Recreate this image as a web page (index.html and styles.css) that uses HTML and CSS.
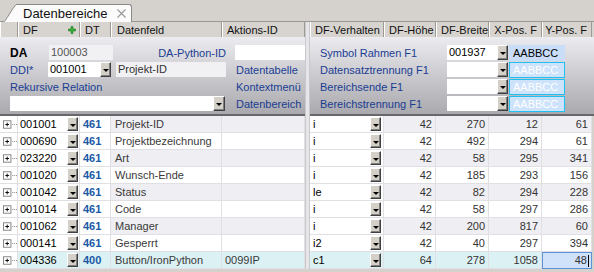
FILE: index.html
```html
<!DOCTYPE html>
<html lang="de">
<head>
    <meta charset="UTF-8">
    <title>Datenbereiche</title>
    <link rel="stylesheet" href="styles.css">
</head>
<body>
    <div class="tabbar">
        <svg class="tab-edge" width="13" height="18" viewBox="0 0 13 18">
            <path d="M0 18 C4 13 8 5 12 0.5 L13 0.5 L13 18 Z" fill="#fbfbfb"/>
            <path d="M0.5 17.5 C4 13 8 5 12 0.5 L13 0.5" fill="none" stroke="#8a8a8a"/>
        </svg>
        <div class="tab">
            <span>Datenbereiche</span>
            <svg class="tab-close" width="9" height="9" viewBox="0 0 9 9">
                <path d="M0.5 0.5 L8.5 8.5 M8.5 0.5 L0.5 8.5" stroke="#9a9a9a" stroke-width="1.2"/>
            </svg>
        </div>
    </div>

    <div class="split">
        <!-- fixed columns -->
        <div class="pane pane-left">
            <div class="hdr cols-left">
                <div class="hc"></div>
                <div class="hc hc-df">DF
                    <svg class="plus" width="8" height="8" viewBox="0 0 8 8">
                        <path d="M3 0.5 H5 V3 H7.5 V5 H5 V7.5 H3 V5 H0.5 V3 H3 Z" fill="#37b33c" stroke="#1f7a24" stroke-width="0.6"/>
                    </svg>
                </div>
                <div class="hc">DT</div>
                <div class="hc hc-feld">Datenfeld</div>
                <div class="hc">Aktions-ID</div>
            </div>

            <div class="form form-left">
                <div class="frow">
                    <span class="lbl-bold">DA</span>
                    <span class="inp inp-ro inp-da">100003</span>
                    <span class="lbl lbl-right">DA-Python-ID</span>
                </div>
                <div class="frow frow-side">
                    <span class="inp inp-pyid"></span>
                </div>

                <div class="frow">
                    <span class="lbl lbl-ddi">DDI*</span>
                    <span class="inp inp-ddi">001001</span>
                    <span class="dd"></span>
                    <span class="inp inp-ro inp-name">Projekt-ID</span>
                </div>
                <div class="frow frow-side"><span class="lbl">Datentabelle</span></div>

                <div class="frow"><span class="lbl">Rekursive Relation</span></div>
                <div class="frow frow-side"><span class="lbl">Kontextmenü</span></div>

                <div class="frow">
                    <span class="inp inp-rel"></span>
                    <span class="dd dd-wide"></span>
                </div>
                <div class="frow frow-side"><span class="lbl">Datenbereich</span></div>
            </div>

            <div class="rows" id="rowsLeft"></div>
        </div>

        <div class="splitter"></div>

        <!-- scrolling columns -->
        <div class="pane pane-right">
            <div class="hdr cols-right">
                <div class="hc">DF-Verhalten</div>
                <div class="hc">DF-Höhe</div>
                <div class="hc">DF-Breite</div>
                <div class="hc hc-num">X-Pos. F</div>
                <div class="hc hc-num">Y-Pos. F</div>
            </div>

            <div class="form form-right">
                <div class="frow">
                    <span class="lbl lbl-wide">Symbol Rahmen F1</span>
                    <span class="inp inp-col">001937</span>
                    <span class="dd"></span>
                    <span class="swatch swatch-set">AABBCC</span>
                </div>
                <div class="frow">
                    <span class="lbl lbl-wide">Datensatztrennung F1</span>
                    <span class="inp inp-col"></span>
                    <span class="dd"></span>
                    <span class="swatch">AABBCC</span>
                </div>
                <div class="frow">
                    <span class="lbl lbl-wide">Bereichsende F1</span>
                    <span class="inp inp-col"></span>
                    <span class="dd"></span>
                    <span class="swatch">AABBCC</span>
                </div>
                <div class="frow">
                    <span class="lbl lbl-wide">Bereichstrennung F1</span>
                    <span class="inp inp-col"></span>
                    <span class="dd"></span>
                    <span class="swatch">AABBCC</span>
                </div>
            </div>

            <div class="rows" id="rowsRight"></div>
        </div>
    </div>

    <script src="script.js"></script>
</body>
</html>
```

FILE: styles.css
```css
* {
    margin: 0;
    padding: 0;
    box-sizing: border-box;
}

body {
    width: 594px;
    height: 272px;
    overflow: hidden;
    background: #d5d2cd;
    font-family: "Liberation Sans", Arial, sans-serif;
    font-size: 11px;
    color: #222;
}

/* tab strip */
.tabbar {
    height: 22px;
    display: flex;
    align-items: flex-end;
    padding-left: 4px;
    border-bottom: 1px solid #9a9894;
}

.tab-edge {
    display: block;
    margin-bottom: -1px;
}

.tab {
    height: 18px;
    width: 115px;
    margin-bottom: -1px;
    background: #fbfbfb;
    border-top: 1px solid #8a8a8a;
    border-right: 1px solid #8a8a8a;
    border-top-right-radius: 3px;
    padding-left: 6px;
    display: flex;
    align-items: center;
    gap: 9px;
    font-size: 13px;
    color: #111;
}

.tab-close {
    display: block;
}

/* split panes */
.split {
    display: flex;
}

.pane-left {
    width: 305px;
}

.pane-right {
    width: 284px;
}

.splitter {
    width: 5px;
    background: #e6e5e8;
    border-left: 1px solid #c9c8cc;
    border-right: 1px solid #c9c8cc;
}

.cols-left {
    display: grid;
    grid-template-columns: 18px 62px 31px 111px 83px;
}

.cols-right {
    display: grid;
    grid-template-columns: 74px 52px 53px 53px 50px;
}

/* header */
.hdr {
    height: 15px;
    background: #d7d4cf;
}

.hc {
    border-left: 1px solid #fff;
    border-right: 1px solid #9d9a95;
    padding-left: 4px;
    line-height: 14px;
    color: #111;
    white-space: nowrap;
    display: flex;
    align-items: center;
}

.hc-df {
    justify-content: space-between;
    padding-right: 3px;
}

.hc-feld {
    padding-left: 5px;
}

.hc-num {
    justify-content: flex-end;
    padding-right: 4px;
}

.plus {
    display: block;
}

/* form area */
.form {
    height: 79px;
    padding: 8px 0 3px 10px;
    background: linear-gradient(#ecebef, #a9a9ae);
    border-bottom: 2px solid #68686c;
    display: grid;
    grid-auto-rows: 15px;
    row-gap: 2px;
}

.form-left {
    grid-template-columns: 216px 79px;
}

.form-right {
    grid-template-columns: 1fr;
}

.frow {
    display: flex;
    align-items: center;
    height: 15px;
}

.frow-side {
    padding-left: 10px;
}

.lbl {
    color: #1a3d92;
    white-space: nowrap;
}

.lbl-bold {
    width: 39px;
    font-weight: bold;
    font-size: 12px;
    color: #000;
}

.lbl-right {
    margin-left: auto;
}

.lbl-ddi {
    width: 38px;
}

.lbl-wide {
    width: 127px;
}

.inp {
    height: 15px;
    background: #fff;
    line-height: 15px;
    padding-left: 2px;
    color: #000;
    white-space: nowrap;
}

.inp-ro {
    background: #f1f0f3;
    color: #555;
}

.inp-da {
    width: 64px;
}

.inp-pyid {
    width: 70px;
    margin-left: -1px;
}

.inp-ddi {
    width: 52px;
}

.inp-name {
    width: 110px;
    margin-left: 5px;
    color: #333;
}

.inp-rel {
    width: 203px;
}

.inp-col {
    width: 50px;
}

/* combo button */
.dd {
    width: 11px;
    height: 15px;
    background: #d4d0c8;
    border: 1px solid;
    border-color: #fff #404040 #404040 #fff;
    box-shadow: inset -1px -1px #808080;
    display: flex;
    align-items: center;
    justify-content: center;
    flex: none;
}

.dd::after {
    content: "";
    margin-top: 2px;
    border-left: 3px solid transparent;
    border-right: 3px solid transparent;
    border-top: 3px solid #000;
}

.dd-wide {
    width: 12px;
}

.swatch {
    width: 56px;
    height: 16px;
    margin-left: 1px;
    background: #cde2fb;
    border: 1px solid #1ec1f2;
    color: #fff;
    line-height: 14px;
    padding-left: 3px;
}

.swatch-set {
    background: #c9dcf8;
    border-color: #c9dcf8;
    color: #000;
}

/* rows */
.row {
    height: 17px;
}

.cell {
    border-right: 1px solid #e0dfe3;
    border-bottom: 1px solid #e0dfe3;
    line-height: 16px;
    padding: 0 3px;
    white-space: nowrap;
    overflow: hidden;
    color: #3a3a3a;
    background: #fff;
}

.row.odd .cell {
    background: #efeef2;
}

.row .cell.plain {
    background: #fff;
}

.row.sel .cell {
    background: #dcf1f3;
}

.row.sel .cell.exp {
    background: #fff;
}

.exp {
    display: flex;
    align-items: center;
    padding: 0 0 0 3px;
}

.tree-box {
    display: block;
}

.df {
    display: flex;
    align-items: center;
    justify-content: space-between;
    padding: 0 1px 0 2px;
    color: #000;
}

.df .dd,
.behav .dd {
    height: 14px;
}

.dt {
    font-weight: bold;
    color: #1a5aa6;
    padding-left: 3px;
}

.feld {
    padding-left: 4px;
}

.behav {
    display: flex;
    align-items: center;
    justify-content: space-between;
    padding: 0 2px 0 3px;
    color: #000;
}

.num {
    text-align: right;
    padding-right: 3px;
    color: #333;
}

.row.sel .cell.cur {
    background: #cfe2f9;
    border: 1px solid #5b93d6;
    line-height: 14px;
    padding-right: 2px;
}

.caret {
    display: inline-block;
    width: 1px;
    height: 12px;
    background: #000;
    vertical-align: middle;
    margin-left: 1px;
}
```

FILE: script.js
```js
const rows = [
    ['001001', '461', 'Projekt-ID', '', 'i', 42, 270, 12, 61],
    ['000690', '461', 'Projektbezeichnung', '', 'i', 42, 492, 294, 61],
    ['023220', '461', 'Art', '', 'i', 42, 58, 295, 341],
    ['001020', '461', 'Wunsch-Ende', '', 'i', 42, 185, 293, 156],
    ['001042', '461', 'Status', '', 'le', 42, 82, 294, 228],
    ['001014', '461', 'Code', '', 'i', 42, 58, 297, 286],
    ['001062', '461', 'Manager', '', 'i', 42, 200, 817, 60],
    ['000141', '461', 'Gesperrt', '', 'i2', 42, 40, 297, 394],
    ['004336', '400', 'Button/IronPython', '0099IP', 'c1', 64, 278, 1058, 48]
];

const treeBox = '<svg class="tree-box" width="15" height="9" viewBox="0 0 15 9">' +
    '<rect x="0.5" y="0.5" width="8" height="8" fill="#fff" stroke="#808080"/>' +
    '<path d="M2.5 4.5 H6.5 M4.5 2.5 V6.5" stroke="#000"/>' +
    '<path d="M10 4.5 H11 M12 4.5 H13 M14 4.5 H15" stroke="#808080"/></svg>';

const left = document.getElementById('rowsLeft');
const right = document.getElementById('rowsRight');

rows.forEach((r, i) => {
    const last = i === rows.length - 1;
    const cls = 'row ' + (last ? 'sel' : (i % 2 === 0 ? 'odd' : 'even'));

    const l = document.createElement('div');
    l.className = cls + ' cols-left';
    l.innerHTML =
        '<div class="cell exp plain">' + treeBox + '</div>' +
        '<div class="cell df plain"><span>' + r[0] + '</span><span class="dd"></span></div>' +
        '<div class="cell dt plain">' + r[1] + '</div>' +
        '<div class="cell feld">' + r[2] + '</div>' +
        '<div class="cell">' + r[3] + '</div>';
    left.appendChild(l);

    const rr = document.createElement('div');
    rr.className = cls + ' cols-right';
    rr.innerHTML =
        '<div class="cell behav plain"><span>' + r[4] + '</span><span class="dd"></span></div>' +
        '<div class="cell num">' + r[5] + '</div>' +
        '<div class="cell num">' + r[6] + '</div>' +
        '<div class="cell num">' + r[7] + '</div>' +
        '<div class="cell num' + (last ? ' cur' : '') + '">' + r[8] +
        (last ? '<span class="caret"></span>' : '') + '</div>';
    right.appendChild(rr);
});
```
